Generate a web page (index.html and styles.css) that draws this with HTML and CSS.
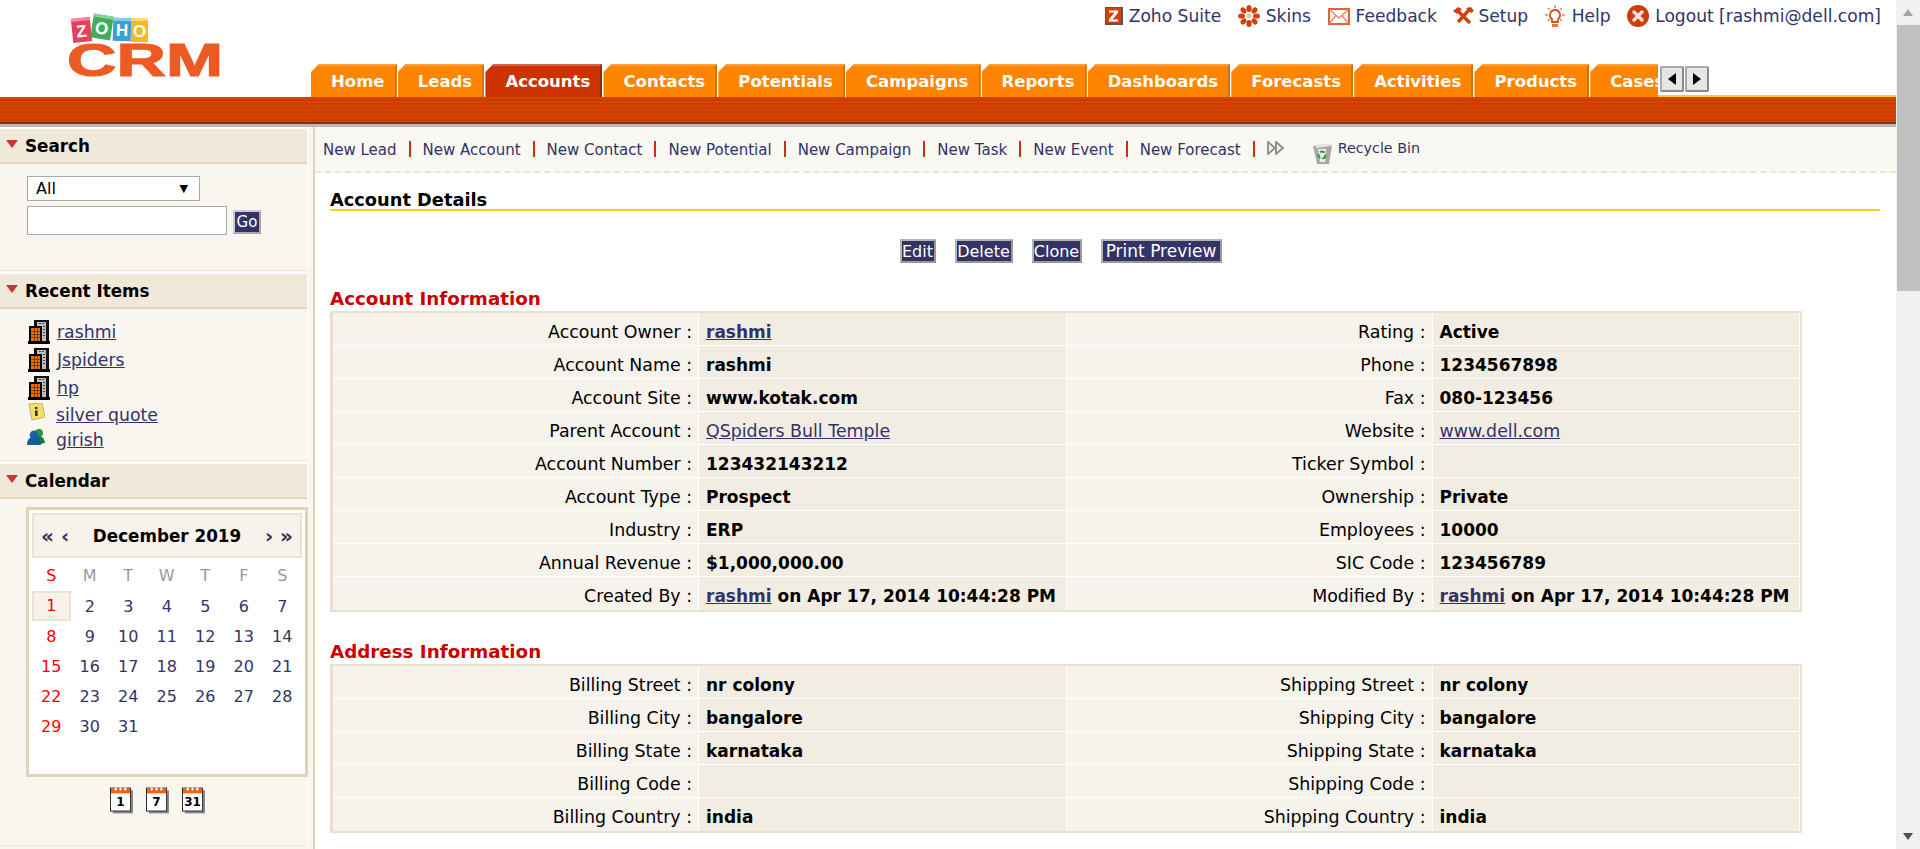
FILE: index.html
```html
<!DOCTYPE html>
<html lang="en">
<head>
  <meta charset="UTF-8" />
  <title>Zoho CRM - Account Details</title>
  <link rel="stylesheet" href="styles.css">
</head>
<body>
  <svg class="sprites" xmlns="http://www.w3.org/2000/svg" aria-hidden="true">
    <symbol id="i-building" viewBox="0 0 22 24">
      <rect x="0" y="21" width="22" height="3" fill="#000"/>
      <path d="M6 0h15v22H6z" fill="#111"/>
      <path d="M9 2h9v19H9z" fill="#bdbdbd"/>
      <path d="M11 3h2v1h-2zm3 0h2v1h-2zm1 3h2v1h-2zm0 3h2v1h-2zm0 3h2v1h-2zm0 3h2v1h-2z" fill="#444"/>
      <path d="M1 6h13v16H1z" fill="#000"/>
      <path d="M3 8h9v13H3z" fill="#f07208"/>
      <path d="M3 11h9v1H3zm0 3h9v1H3zm0 3h9v1H3zM6 8h1v13H6zm3 0h1v13H9z" fill="#7a3a00"/>
    </symbol>
    <symbol id="i-note" viewBox="0 0 18 18">
      <path d="M2 1l13-1 3 14-13 3z" fill="#f2df6e" stroke="#c9b451" stroke-width="1"/>
      <rect x="8" y="4" width="2.4" height="2.2" fill="#333"/>
      <rect x="8" y="7.5" width="2.6" height="5.5" fill="#333"/>
    </symbol>
    <symbol id="i-contact" viewBox="0 0 18 18">
      <circle cx="12" cy="5" r="4" fill="#1f9a3d"/>
      <path d="M8 9c4-2 9-1 10 6l-5 1z" fill="#127a2c"/>
      <circle cx="7" cy="7" r="4.4" fill="#1c62a8"/>
      <path d="M0 17c0-6 3-8 7-8s7 2 7 8z" fill="#1a5a9c"/>
    </symbol>
    <symbol id="i-cal" viewBox="0 0 24 27">
      <rect x="3" y="3" width="21" height="24" fill="#8a8a8a"/>
      <rect x="0.5" y="0.5" width="21" height="24" fill="#fff" stroke="#222"/>
      <rect x="1" y="1" width="20" height="5" fill="#f2600c"/>
      <path d="M5 0h2v3H5zm5 0h2v3h-2zm5 0h2v3h-2z" fill="#fff"/>
    </symbol>
  </svg>

  <div class="page">
    <div class="window">
      <header class="top">
        <a class="logo" href="#">
          <svg width="157" height="63" viewBox="0 0 157 63" xmlns="http://www.w3.org/2000/svg">
            <g font-family="'Liberation Sans', sans-serif" font-weight="700" font-size="17" text-anchor="middle" fill="#fff">
              <g transform="rotate(-6 14 15)"><rect x="5" y="3" width="19" height="24" fill="#e6405c"/><rect x="5" y="3" width="19" height="3" fill="#f28a9a"/><text x="14.500" y="22">Z</text></g>
              <g transform="rotate(9 35 12)"><rect x="25" y="0" width="20" height="24" fill="#3fae5a"/><rect x="25" y="0" width="20" height="3" fill="#86d39a"/><text x="35" y="19">O</text></g>
              <g transform="rotate(2 55 15)"><rect x="46" y="3" width="18" height="23" fill="#3a9fd8"/><rect x="46" y="3" width="18" height="3" fill="#8cc9ec"/><text x="55" y="21">H</text></g>
              <rect x="64" y="3" width="17" height="24" fill="#f5b81e"/><rect x="64" y="3" width="17" height="3" fill="#fada7e"/><text x="72.500" y="22">O</text>
            </g>
            <text x="0" y="61" font-family="'Liberation Sans', sans-serif" font-weight="700" font-size="47" fill="#ee5a24" stroke="#ee5a24" stroke-width="1.2" textLength="156" lengthAdjust="spacingAndGlyphs">CRM</text>
          </svg>
        </a>
        <div class="top-right">
          <nav class="top-links">
            <a href="#">
              <svg class="ic-zoho" viewBox="0 0 18 18" xmlns="http://www.w3.org/2000/svg"><rect width="18" height="18" fill="#555"/><rect x="1" y="1" width="15" height="15" fill="#d8400f"/><path d="M4 3.500h9v2.200L7.500 12.500H13v2H4v-2.200l5.500-6.800H4z" fill="#fff"/></svg>
              <span>Zoho Suite</span>
            </a>
            <a href="#">
              <svg class="ic-skin" viewBox="0 0 22 22" xmlns="http://www.w3.org/2000/svg"><g fill="#d2400f"><ellipse cx="11" cy="3.500" rx="2.600" ry="3.500"/><ellipse cx="11" cy="18.500" rx="2.600" ry="3.500"/><ellipse cx="3.500" cy="11" rx="3.500" ry="2.600"/><ellipse cx="18.500" cy="11" rx="3.500" ry="2.600"/><ellipse cx="5.500" cy="5.500" rx="2.500" ry="3.400" transform="rotate(-45 5.500 5.500)"/><ellipse cx="16.500" cy="5.500" rx="2.500" ry="3.400" transform="rotate(45 16.500 5.500)"/><ellipse cx="5.500" cy="16.500" rx="2.500" ry="3.400" transform="rotate(45 5.500 16.500)"/><ellipse cx="16.500" cy="16.500" rx="2.500" ry="3.400" transform="rotate(-45 16.500 16.500)"/></g><circle cx="11" cy="11" r="2.400" fill="#f7b9a0"/></svg>
              <span>Skins</span>
            </a>
            <a href="#">
              <svg class="ic-mail" viewBox="0 0 22 17" xmlns="http://www.w3.org/2000/svg"><rect x="1" y="1" width="20" height="15" fill="#fff" stroke="#e0623a" stroke-width="2"/><path d="M1.500 1.500L11 10l9.500-8.500M1.500 15.500L8 7.500M20.500 15.500L14 7.500" fill="none" stroke="#e88a68" stroke-width="1.400"/></svg>
              <span>Feedback</span>
            </a>
            <a class="tight" href="#">
              <svg class="ic-setup" viewBox="0 0 21 18" xmlns="http://www.w3.org/2000/svg"><g fill="none" stroke="#d2400f" stroke-width="3.400"><path d="M4 3l13 13"/><path d="M16 3L5 15"/></g><path d="M0 4l5-4 4 2-5 5zM13 1l5-1 3 4-3 2-2-2z" fill="#d2400f"/></svg>
              <span>Setup</span>
            </a>
            <a class="wide" href="#">
              <svg class="ic-help" viewBox="0 0 20 23" xmlns="http://www.w3.org/2000/svg"><path d="M10 5a5 5 0 0 1 3 9v3H7v-3a5 5 0 0 1 3-9z" fill="#fff" stroke="#d2501f" stroke-width="1.800"/><path d="M7 19h6v3H7z" fill="#e0724a"/><path d="M10 0v3M3 3l2 2M17 3l-2 2M0 10h3M17 10h3M3 16l2-2M17 16l-2-2" stroke="#e8825a" stroke-width="1.500"/></svg>
              <span>Help</span>
            </a>
            <a href="#">
              <svg class="ic-logout" viewBox="0 0 22 22" xmlns="http://www.w3.org/2000/svg"><circle cx="11" cy="11" r="11" fill="#cc3d0c"/><path d="M7 7l8 8M15 7l-8 8" stroke="#fbe4d8" stroke-width="3.400" stroke-linecap="round"/></svg>
              <span>Logout [rashmi@dell.com]</span>
            </a>
          </nav>
          <div class="tab-row">
            <ul class="tabs">
              <li><a href="#">Home</a></li>
              <li><a href="#">Leads</a></li>
              <li class="active"><a href="#">Accounts</a></li>
              <li><a href="#">Contacts</a></li>
              <li><a href="#">Potentials</a></li>
              <li><a href="#">Campaigns</a></li>
              <li><a href="#">Reports</a></li>
              <li><a href="#">Dashboards</a></li>
              <li><a href="#">Forecasts</a></li>
              <li><a href="#">Activities</a></li>
              <li><a href="#">Products</a></li>
              <li><a href="#">Cases</a></li>
            </ul>
            <div class="tab-scroll">
              <button class="tab-arrow" type="button"><span class="tri-left"></span></button>
              <button class="tab-arrow" type="button"><span class="tri-right"></span></button>
            </div>
          </div>
        </div>
      </header>
      <div class="band"></div>

      <div class="columns">
        <aside class="sidebar">
          <section class="panel">
            <h3 class="panel-head"><span class="caret"></span>Search</h3>
            <div class="panel-body search-body">
              <div class="fake-select"><span>All</span><span class="select-arrow">▼</span></div>
              <div class="search-row">
                <input type="text" class="search-input" />
                <button class="go-btn" type="button">Go</button>
              </div>
            </div>
          </section>

          <section class="panel">
            <h3 class="panel-head"><span class="caret"></span>Recent Items</h3>
            <div class="panel-body recent-body">
              <a class="recent" href="#"><svg class="ic-building"><use href="#i-building"/></svg><span>rashmi</span></a>
              <a class="recent" href="#"><svg class="ic-building"><use href="#i-building"/></svg><span>Jspiders</span></a>
              <a class="recent" href="#"><svg class="ic-building"><use href="#i-building"/></svg><span>hp</span></a>
              <a class="recent small" href="#"><svg class="ic-small"><use href="#i-note"/></svg><span>silver quote</span></a>
              <a class="recent small" href="#"><svg class="ic-small"><use href="#i-contact"/></svg><span>girish</span></a>
            </div>
          </section>

          <section class="panel">
            <h3 class="panel-head"><span class="caret"></span>Calendar</h3>
            <div class="panel-body cal-body">
              <div class="cal">
                <div class="cal-head">
                  <span class="cal-nav">« ‹</span>
                  <strong>December 2019</strong>
                  <span class="cal-nav">› »</span>
                </div>
                <div class="cal-grid">
                  <span class="dow sun">S</span><span class="dow">M</span><span class="dow">T</span><span class="dow">W</span><span class="dow">T</span><span class="dow">F</span><span class="dow">S</span>
                  <span class="sun today">1</span><span>2</span><span>3</span><span>4</span><span>5</span><span>6</span><span>7</span>
                  <span class="sun">8</span><span>9</span><span>10</span><span>11</span><span>12</span><span>13</span><span>14</span>
                  <span class="sun">15</span><span>16</span><span>17</span><span>18</span><span>19</span><span>20</span><span>21</span>
                  <span class="sun">22</span><span>23</span><span>24</span><span>25</span><span>26</span><span>27</span><span>28</span>
                  <span class="sun">29</span><span>30</span><span>31</span>
                </div>
              </div>
              <div class="cal-views">
                <div class="cal-view"><svg><use href="#i-cal"/></svg><b>1</b></div>
                <div class="cal-view"><svg><use href="#i-cal"/></svg><b>7</b></div>
                <div class="cal-view"><svg><use href="#i-cal"/></svg><b>31</b></div>
              </div>
            </div>
          </section>
        </aside>

        <main class="content">
          <div class="quick">
            <a href="#">New Lead</a><i></i>
            <a href="#">New Account</a><i></i>
            <a href="#">New Contact</a><i></i>
            <a href="#">New Potential</a><i></i>
            <a href="#">New Campaign</a><i></i>
            <a href="#">New Task</a><i></i>
            <a href="#">New Event</a><i></i>
            <a href="#">New Forecast</a><i></i>
            <svg class="ic-more" viewBox="0 0 18 14" xmlns="http://www.w3.org/2000/svg"><path d="M1 1l7 6-7 6zM9 1l7 6-7 6z" fill="#f4f4f0" stroke="#8c8c8c" stroke-width="1.800"/></svg>
            <a class="recycle" href="#">
              <svg class="ic-bin" viewBox="0 0 20 22" xmlns="http://www.w3.org/2000/svg"><path d="M1 4l17-2 2 2-3 18H5z" fill="#a9a9a4"/><path d="M3 3l15-2 1 3-15 2z" fill="#e4e4e0"/><path d="M6 7h8l-1 13H8z" fill="#efefeb"/><circle cx="10" cy="13" r="3.500" fill="none" stroke="#2c9a3c" stroke-width="2" stroke-dasharray="5 2"/></svg>
              <span>Recycle Bin</span>
            </a>
          </div>

          <div class="details">
            <h2 class="page-title">Account Details</h2>

            <div class="actions">
              <button class="btn btn-edit" type="button">Edit</button>
              <button class="btn btn-delete" type="button">Delete</button>
              <button class="btn btn-clone" type="button">Clone</button>
              <button class="btn btn-print" type="button">Print Preview</button>
            </div>

            <h3 class="section-title">Account Information</h3>
            <table class="info">
              <tr><td class="lbl">Account Owner :</td><td class="val"><a href="#">rashmi</a></td><td class="lbl">Rating :</td><td class="val">Active</td></tr>
              <tr><td class="lbl">Account Name :</td><td class="val">rashmi</td><td class="lbl">Phone :</td><td class="val">1234567898</td></tr>
              <tr><td class="lbl">Account Site :</td><td class="val">www.kotak.com</td><td class="lbl">Fax :</td><td class="val">080-123456</td></tr>
              <tr><td class="lbl">Parent Account :</td><td class="val"><a class="plain" href="#">QSpiders Bull Temple</a></td><td class="lbl">Website :</td><td class="val"><a class="plain" href="#">www.dell.com</a></td></tr>
              <tr><td class="lbl">Account Number :</td><td class="val">123432143212</td><td class="lbl">Ticker Symbol :</td><td class="val"></td></tr>
              <tr><td class="lbl">Account Type :</td><td class="val">Prospect</td><td class="lbl">Ownership :</td><td class="val">Private</td></tr>
              <tr><td class="lbl">Industry :</td><td class="val">ERP</td><td class="lbl">Employees :</td><td class="val">10000</td></tr>
              <tr><td class="lbl">Annual Revenue :</td><td class="val">$1,000,000.00</td><td class="lbl">SIC Code :</td><td class="val">123456789</td></tr>
              <tr><td class="lbl">Created By :</td><td class="val"><a href="#">rashmi</a> on Apr 17, 2014 10:44:28 PM</td><td class="lbl">Modified By :</td><td class="val"><a href="#">rashmi</a> on Apr 17, 2014 10:44:28 PM</td></tr>
            </table>

            <h3 class="section-title second">Address Information</h3>
            <table class="info">
              <tr><td class="lbl">Billing Street :</td><td class="val">nr colony</td><td class="lbl">Shipping Street :</td><td class="val">nr colony</td></tr>
              <tr><td class="lbl">Billing City :</td><td class="val">bangalore</td><td class="lbl">Shipping City :</td><td class="val">bangalore</td></tr>
              <tr><td class="lbl">Billing State :</td><td class="val">karnataka</td><td class="lbl">Shipping State :</td><td class="val">karnataka</td></tr>
              <tr><td class="lbl">Billing Code :</td><td class="val"></td><td class="lbl">Shipping Code :</td><td class="val"></td></tr>
              <tr><td class="lbl">Billing Country :</td><td class="val">india</td><td class="lbl">Shipping Country :</td><td class="val">india</td></tr>
            </table>
          </div>
        </main>
      </div>
    </div>

    <div class="scrollbar">
      <div class="sb-end"><span class="sb-up"></span></div>
      <div class="sb-thumb"></div>
      <div class="sb-track"></div>
      <div class="sb-end"><span class="sb-down"></span></div>
    </div>
  </div>
</body>
</html>
```

FILE: styles.css
```css
* {
  box-sizing: border-box;
  margin: 0;
  padding: 0;
}
html, body {
  height: 100%;
  overflow: hidden;
}
body {
  font-family: "DejaVu Sans", Verdana, sans-serif;
  font-size: 17.4px;
  color: #000;
  background: #fff;
}
a {
  color: #333366;
}
.sprites {
  width: 0;
  height: 0;
  display: block;
}
.page {
  display: flex;
  height: 849px;
}
.window {
  width: 1896px;
  display: flex;
  flex-direction: column;
}

/* header */
.top {
  height: 97px;
  display: flex;
}
.logo {
  width: 311px;
  padding: 15px 0 0 67px;
  display: block;
}
.logo svg {
  overflow: visible;
}
.top-right {
  flex: 1;
  min-width: 0;
  display: flex;
  flex-direction: column;
  justify-content: space-between;
}
.top-links {
  height: 32px;
  padding-right: 15px;
  display: flex;
  justify-content: flex-end;
  align-items: center;
  gap: 16.5px;
  font-size: 17.1px;
}
.top-links a {
  display: flex;
  align-items: center;
  gap: 6px;
  text-decoration: none;
  white-space: nowrap;
}
.top-links a.tight { gap: 4px; }
.top-links a.wide { gap: 7px; }
.ic-zoho { width: 18px; height: 18px; }
.ic-skin { width: 22px; height: 22px; }
.ic-mail { width: 22px; height: 17px; }
.ic-setup { width: 21px; height: 18px; }
.ic-help { width: 20px; height: 23px; }
.ic-logout { width: 22px; height: 22px; }

.tab-row {
  height: 33px;
  display: flex;
}
.tabs {
  width: 1347px;
  display: flex;
  gap: 1px;
  overflow: hidden;
  list-style: none;
}
.tabs li {
  flex: none;
  height: 33px;
  background: #ff8400;
  border-top: 2px solid #ff9f3c;
  border-right: 2px solid #c8741a;
  clip-path: polygon(8px 0, 100% 0, 100% 100%, 0 100%, 0 8px);
}
.tabs li.active {
  background: #cc3300;
  border-top-color: #d8614a;
  border-right-color: #8f2c08;
}
.tabs a {
  display: block;
  padding: 0 10.2px 0 20px;
  line-height: 31px;
  font-size: 16.5px;
  font-weight: bold;
  color: #fff;
  text-decoration: none;
}
.tab-scroll {
  flex: 1;
  display: flex;
  gap: 1px;
  padding: 2px 0 0 2px;
  height: 33px;
  border-bottom: 2px solid #ffcc22;
}
.tab-arrow {
  width: 24px;
  height: 26px;
  display: flex;
  align-items: center;
  justify-content: center;
  background: #e6e6e6;
  border: 2px solid #8a8a8a;
  border-top-color: #aaa;
  border-left-color: #aaa;
  border-radius: 2px;
}
.tri-left, .tri-right {
  width: 0;
  height: 0;
  border-top: 6px solid transparent;
  border-bottom: 6px solid transparent;
}
.tri-left { border-right: 8px solid #000; }
.tri-right { border-left: 8px solid #000; }

.band {
  height: 30px;
  flex: none;
  background: repeating-linear-gradient(#d64400 0, #d64400 2px, #c83e00 2px, #c83e00 4px);
  border-bottom: 3px solid #bcb8b0;
  box-shadow: inset 0 -2px 0 #8d2f06;
}

.columns {
  flex: 1;
  min-height: 0;
  display: flex;
}

/* left column */
.sidebar {
  width: 315px;
  flex: none;
  padding-right: 5px;
  background: #f9f6ef;
  border-right: 2px solid #e0d4b8;
}
.panel {
  border-right: 1px solid #fff;
  border-bottom: 1px solid #efe8da;
}
.panel-head {
  height: 35px;
  margin-top: 3px;
  display: flex;
  align-items: center;
  gap: 7px;
  padding-left: 6px;
  font-size: 16.8px;
  background: #f0e9da;
  border-bottom: 2px solid #e3d7bf;
  box-shadow: 0 -2px 0 #fff;
}
.panel:first-child .panel-head {
  margin-top: 2px;
}
.caret {
  width: 0;
  height: 0;
  margin-top: -4px;
  border-left: 6.5px solid transparent;
  border-right: 6.5px solid transparent;
  border-top: 8px solid #cc3333;
}
.search-body {
  height: 106px;
  padding: 12px 0 0 27px;
}
.fake-select {
  width: 173px;
  height: 25px;
  padding: 0 11px 0 8px;
  display: flex;
  justify-content: space-between;
  align-items: center;
  font-size: 16px;
  background: #fff;
  border: 1px solid #aaa;
}
.select-arrow {
  font-size: 11px;
}
.search-row {
  margin-top: 5px;
  display: flex;
  align-items: center;
  gap: 6px;
}
.search-input {
  width: 200px;
  height: 29px;
  background: #fff;
  border: 1px solid #aaa;
}
.go-btn {
  width: 28px;
  height: 24px;
  margin-top: 3px;
  font-family: inherit;
  font-size: 15px;
  color: #fff;
  background: #333366;
  border: 2px solid #aaa;
  border-top-color: #ccc;
  border-left-color: #ccc;
}
.recent-body {
  height: 151px;
  padding: 9px 0 0 28px;
}
.recent {
  height: 28px;
  display: flex;
  align-items: center;
  gap: 7px;
}
.recent.small {
  height: 25px;
  margin-left: -1px;
  gap: 11px;
}
.recent span {
  font-size: 17.3px;
}
.ic-building {
  width: 22px;
  height: 24px;
}
.ic-small {
  width: 18px;
  height: 18px;
  margin-top: -5px;
}
.cal-body {
  height: 346px;
  padding: 8px 0 0 26px;
}
.cal {
  width: 282px;
  height: 270px;
  padding: 3px;
  background: #fff;
  border: 3px solid #e0d4b8;
}
.cal-head {
  height: 45px;
  padding: 0 7px;
  display: flex;
  justify-content: space-between;
  align-items: center;
  font-size: 16.8px;
  background: #f7f3ec;
  border: 2px solid #ede3d2;
}
.cal-nav {
  font-size: 20px;
  font-weight: bold;
  line-height: 20px;
  color: #333366;
}
.cal-grid {
  display: grid;
  grid-template-columns: repeat(7, 38.5px);
  grid-template-rows: 33px repeat(5, 30px);
  font-size: 16px;
  color: #333366;
  text-align: center;
  line-height: 32px;
}
.cal-grid .dow {
  line-height: 35px;
  color: #999;
}
.cal-grid .sun {
  color: #f00;
}
.cal-grid .today {
  line-height: 26px;
  background: #f7f3ec;
  border: 2px solid #ede3d2;
}
.cal-views {
  margin-top: 10px;
  padding-left: 84px;
  display: flex;
  gap: 13px;
}
.cal-view {
  width: 23px;
  height: 27px;
  position: relative;
}
.cal-view svg {
  width: 23px;
  height: 27px;
  display: block;
}
.cal-view b {
  position: absolute;
  left: 0;
  right: 2px;
  top: 8px;
  font-size: 12px;
  line-height: 14px;
  text-align: center;
}

/* right column */
.content {
  flex: 1;
  min-width: 0;
}
.quick {
  height: 46px;
  padding: 2px 0 0 8px;
  display: flex;
  align-items: center;
  font-size: 15px;
  background: #f9f8f3;
  border-bottom: 2px dashed #ece4d4;
}
.quick a {
  text-decoration: none;
  white-space: nowrap;
}
.quick i {
  width: 2px;
  height: 16px;
  margin: -2px 12px 0;
  background: #c8320a;
}
.ic-more {
  width: 18px;
  height: 14px;
  margin-top: -4px;
}
.recycle {
  margin-left: 27px;
  display: flex;
  align-items: center;
  gap: 6px;
}
.recycle span {
  margin-top: -4px;
  font-size: 14.3px;
}
.ic-bin {
  width: 20px;
  height: 22px;
  margin-top: 6px;
}
.details {
  padding: 0 16px 0 15px;
}
.page-title {
  height: 38px;
  padding-top: 16px;
  font-size: 17.8px;
  line-height: 21px;
  border-bottom: 2px solid #ffcc22;
}
.actions {
  width: 1472px;
  margin-top: 28px;
  padding-right: 11px;
  display: flex;
  justify-content: center;
  gap: 19px;
}
.btn {
  height: 24px;
  padding: 0;
  font-family: inherit;
  font-size: 16px;
  line-height: 21px;
  color: #fff;
  background: #333366;
  border: 2px solid #999;
  border-top-color: #b5b5b5;
  border-left-color: #b5b5b5;
}
.btn-edit { width: 36px; }
.btn-delete { width: 58px; }
.btn-clone { width: 50px; }
.btn-print { width: 121px; font-size: 17px; }
.section-title {
  height: 22px;
  margin: 24px 0 2px;
  font-size: 18.3px;
  line-height: 23px;
  color: #cc0000;
}
.section-title.second {
  margin-top: 28px;
}
.info {
  width: 1472px;
  table-layout: fixed;
  border-collapse: separate;
  border-spacing: 0;
  border: 2px solid #e9e0d0;
  border-left-width: 3px;
}
.info td {
  height: 33px;
  padding-top: 5px;
  border-bottom: 1px solid #fff;
  white-space: nowrap;
}
.info tr:last-child td {
  border-bottom: 0;
}
.info .lbl {
  width: 366px;
  padding-right: 6px;
  text-align: right;
  background: #f6f2ec;
  border-right: 1px solid #fff;
}
.info .val {
  padding-left: 7px;
  font-size: 17px;
  font-weight: bold;
  background: #f1ede2;
  border-right: 1px solid #fff;
}
.info .val a.plain {
  font-weight: normal;
  font-size: 17.4px;
}

/* scrollbar */
.scrollbar {
  width: 24px;
  flex: none;
  display: flex;
  flex-direction: column;
  background: #f1f1f1;
}
.sb-end {
  height: 25px;
  display: flex;
  align-items: center;
  justify-content: center;
}
.sb-up, .sb-down {
  width: 0;
  height: 0;
  border-left: 5.5px solid transparent;
  border-right: 5.5px solid transparent;
}
.sb-up { border-bottom: 7px solid #a3a3a3; }
.sb-down { border-top: 7px solid #505050; }
.sb-thumb {
  height: 266px;
  margin-left: 1px;
  background: #c1c1c1;
}
.sb-track {
  flex: 1;
}
```
